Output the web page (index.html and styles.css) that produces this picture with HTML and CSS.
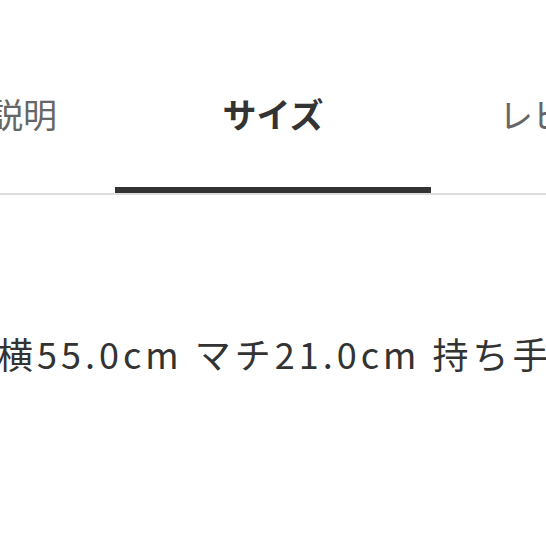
FILE: index.html
```html
<!DOCTYPE html>
<html lang="ja">
<head>
    <meta charset="UTF-8">
    <meta name="viewport" content="width=device-width, initial-scale=1.0">
    <title>サイズ</title>
    <link rel="stylesheet" href="styles.css">
</head>
<body>

<div class="page">
    <div class="tabs">
        <div class="tab tab-first">商品説明</div>
        <div class="tab active">サイズ</div>
        <div class="tab tab-last">レビュー</div>
    </div>

    <div class="detail">
        <p class="size-line">横55.0cm マチ21.0cm 持ち手</p>
    </div>
</div>

</body>
</html>
```

FILE: styles.css
```css
body {
    font-family: "Noto Sans CJK JP", "Noto Sans", sans-serif;
    background: #fff;
    margin: 0;
    color: #333;
}
.page {
    width: 546px;
    height: 546px;
    overflow: hidden;
}
.tabs {
    display: flex;
    white-space: nowrap;
    border-bottom: 2px solid #ddd;
}
.tab {
    flex-shrink: 0;
    font-size: 34px;
    line-height: 34px;
    padding: 97px 0 56px;
    color: #666;
}
.tab-first {
    margin-left: -79px;
    padding-right: 58px;
}
.tab.active {
    width: 316px;
    text-align: center;
    font-weight: bold;
    color: #333;
    border-bottom: 6px solid #333;
}
.tab-last {
    padding-left: 68px;
}
.detail {
    padding-top: 140px;
}
.size-line {
    margin: 0 0 0 -3px;
    font-size: 36px;
    line-height: 36px;
    letter-spacing: 4px;
    white-space: nowrap;
    color: #333;
}
```
